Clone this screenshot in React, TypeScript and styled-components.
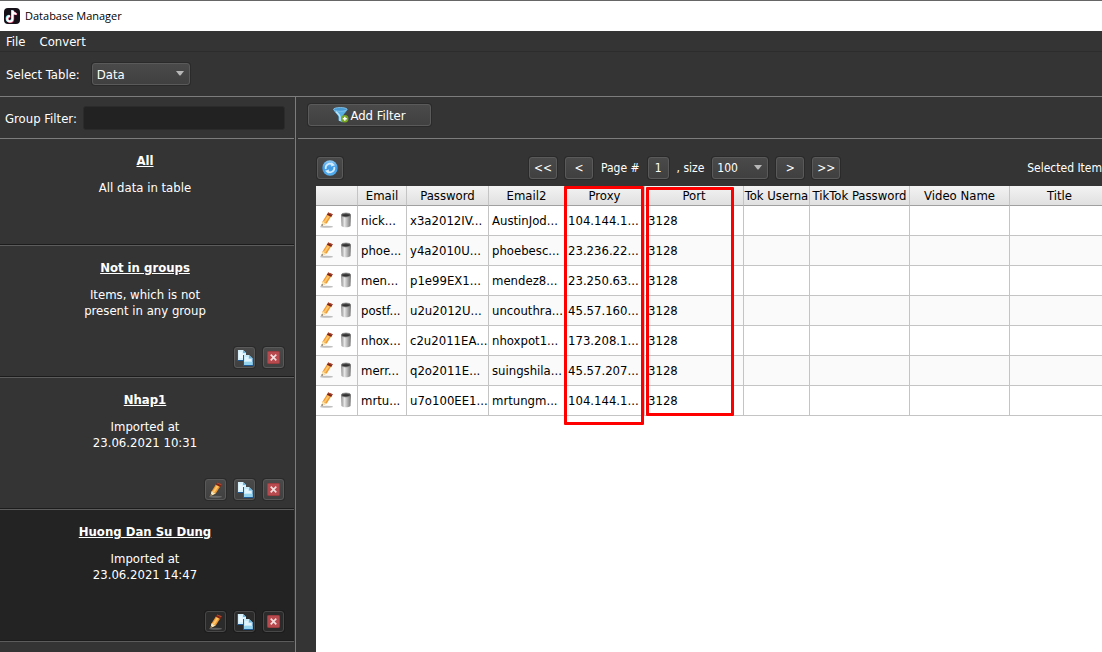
import React from "react";
import styled, { createGlobalStyle, css } from "styled-components";

const uiFont = `"DejaVu Sans Condensed", "Noto Sans", sans-serif`;

const GlobalStyle = createGlobalStyle`
  *, *::before, *::after { box-sizing: border-box; }
  html, body { margin: 0; padding: 0; }
  body { background: #343434; overflow: hidden; }
  body, button, input, select { font-family: ${uiFont}; font-size: 13px; }
  h2, p { margin: 0; }
`;

const Window = styled.div`
  display: flex;
  flex-direction: column;
  height: 100vh;
  color: #fff;
  background: #343434;
  border-top: 1px solid #666;
`;

const TitleBar = styled.header`
  display: flex;
  align-items: center;
  gap: 5px;
  flex: none;
  height: 30px;
  padding: 0 4px 1px;
  background: #fff;
  color: #000;
  font-family: "Open Sans", sans-serif;
  font-size: 11px;
`;

const MenuBar = styled.nav`
  display: flex;
  flex: none;
  gap: 14px;
  height: 21px;
  padding: 1px 6px 0;
  border-bottom: 1px solid #2c2c2c;
`;

const MenuButton = styled.button`
  padding: 0;
  border: 0;
  background: none;
  color: #fff;
`;

const Toolbar = styled.div`
  display: flex;
  align-items: center;
  flex: none;
  gap: 12px;
  height: 45px;
  padding: 0 6px;
  border-bottom: 1px solid #7c7c7c;
`;

const raised = css`
  border: 1px solid #5a5a5a;
  border-radius: 3px;
  background: linear-gradient(#4a4a4a, #404040);
  box-shadow: 0 0 0 1px #2a2a2a;
  color: #fff;
`;

const SelectBox = styled.div<{ $width: number }>`
  position: relative;
  width: ${(p) => p.$width}px;
  height: 22px;

  select {
    appearance: none;
    width: 100%;
    height: 100%;
    padding: 0 4px;
    ${raised}
  }

  svg {
    position: absolute;
    right: 6px;
    top: 8px;
    pointer-events: none;
  }
`;

const Body = styled.div`
  display: flex;
  flex: 1;
  min-height: 0;
`;

const Sidebar = styled.aside`
  display: flex;
  flex-direction: column;
  flex: none;
  width: 296px;
  padding-right: 1px;
  border-right: 1px solid #7c7c7c;
  overflow: hidden;
`;

const GroupFilter = styled.div`
  display: flex;
  align-items: center;
  flex: none;
  gap: 6px;
  height: 42px;
  padding: 1px 9px 0 5px;
  border-bottom: 1px solid #7c7c7c;

  input {
    flex: 1;
    min-width: 0;
    height: 24px;
    padding: 0 6px;
    border: 1px solid #2b2b2b;
    border-radius: 3px;
    background: #222;
    color: #fff;
  }
`;

const Group = styled.section<{ $selected?: boolean; $short?: boolean }>`
  display: flex;
  flex-direction: column;
  flex: none;
  height: ${(p) => (p.$short ? 107 : 132)}px;
  padding: 14px 10px 9px 6px;
  border-bottom: 1px solid #5c5c5c;
  box-shadow: inset 0 -1px #1c1c1c;
  background: ${(p) => (p.$selected ? "#232323" : "#343434")};
  text-align: center;
  line-height: 16px;

  h2 {
    font-size: 13px;
    line-height: 16px;
    text-decoration: underline;
  }

  p {
    margin-top: 11px;
    white-space: pre-line;
  }
`;

const GroupActions = styled.div`
  display: flex;
  justify-content: flex-end;
  gap: 8px;
  margin-top: auto;
`;

const IconButton = styled.button<{ $dark?: boolean }>`
  display: grid;
  place-items: center;
  width: 21px;
  height: 21px;
  padding: 0;
  ${raised}
  ${(p) => p.$dark && css`background: #2b2b2b; border-color: #484848; box-shadow: 0 0 0 1px #1c1c1c;`}
`;

const Main = styled.main`
  display: flex;
  flex-direction: column;
  flex: 1;
  min-width: 0;
  padding-left: 2px;
`;

const FilterBar = styled.div`
  flex: none;
  height: 42px;
  padding: 7px 10px;
  border-bottom: 1px solid #7c7c7c;
`;

const AddFilter = styled.button`
  display: flex;
  align-items: center;
  justify-content: center;
  gap: 1px;
  width: 123px;
  height: 22px;
  padding: 0;
  ${raised}
`;

const Pager = styled.div`
  display: flex;
  align-items: center;
  flex: none;
  height: 47px;
  padding: 11px 0 0 19px;
  white-space: nowrap;
  overflow: hidden;
  font-size: 12px;

  button, select { font-size: 12px; }
`;

const PageButton = styled.button<{ $width?: number }>`
  display: grid;
  place-items: center;
  flex: none;
  width: ${(p) => p.$width ?? 28}px;
  height: 22px;
  padding: 0;
  ${raised}
`;

const PageControls = styled.div`
  display: flex;
  align-items: center;
  gap: 8px;
  margin-left: 186px;
`;

const Selected = styled.span`
  margin-left: auto;
`;

const Grid = styled.div`
  position: relative;
  flex: 1;
  margin-left: 18px;
  background: #fff;
  overflow: hidden;
`;

const Table = styled.table`
  table-layout: fixed;
  width: 100%;
  min-width: 794px;
  border-collapse: separate;
  border-spacing: 0;
  color: #000;

  th, td {
    padding: 0;
    border-right: 1px solid #c4c4c4;
    border-bottom: 1px solid #c4c4c4;
    overflow: hidden;
    white-space: nowrap;
  }

  th {
    height: 20px;
    border-bottom-color: #a0a0a0;
    background: linear-gradient(#f3f3f3, #e0e0e0);
    font-weight: 400;
  }

  td {
    height: 30px;
    padding-left: 3px;
  }

  tbody tr:nth-child(even) { background: #fafafa; }
`;

const HeadLabel = styled.div`
  display: flex;
  justify-content: center;
  padding-top: 1px;
  line-height: 18px;
`;

const RowActions = styled.div`
  display: flex;
  align-items: center;
  gap: 3px;
  padding-bottom: 2px;

  button {
    display: flex;
    padding: 0;
    border: 0;
    background: none;
  }
`;

const Highlight = styled.div<{ $left: number; $top: number; $width: number; $height: number }>`
  position: absolute;
  left: ${(p) => p.$left}px;
  top: ${(p) => p.$top}px;
  width: ${(p) => p.$width}px;
  height: ${(p) => p.$height}px;
  border: 3px solid #f00;
  border-radius: 1px;
  pointer-events: none;
`;

const Arrow = () => (
  <svg width="8" height="5" viewBox="0 0 8 5"><path d="M0 0h8L4.500 4.500h-1z" fill="#b8b8b8" /></svg>
);

const Logo = () => (
  <svg width="16" height="16" viewBox="0 0 16 16" fill="none">
    <rect width="16" height="16" rx="4" fill="#161018" />
    <g strokeWidth="2">
      <path d="M8 2v8.400a2.700 2.700 0 1 1-2.700-2.700M8 2.200c.2 2 1.700 3.200 3.900 3.300" stroke="#6fdfe6" />
      <path d="M9.200 2.800v8.400a2.700 2.700 0 1 1-2.700-2.700M9.200 3c.2 2 1.700 3.200 3.900 3.300" stroke="#e0406e" />
      <path d="M8.600 2.400v8.400a2.700 2.700 0 1 1-2.700-2.700M8.600 2.600c.2 2 1.700 3.200 3.900 3.300" stroke="#fff" />
    </g>
  </svg>
);

const Pencil = () => (
  <svg width="16" height="16" viewBox="0 0 16 16">
    <ellipse cx="7.500" cy="14.700" rx="6.500" ry="1" fill="#8a8a8a" opacity=".55" />
    <path d="M2.500 14l1-4.600L8 2.300l4.200 2.300-4.500 7z" fill="#f09a34" />
    <path d="M4.700 9.800L9 3l1.700.9-4.300 6.900z" fill="#ffc66a" />
    <path d="M2.500 14l1-4.600 1.500.2.600 1.300 2.100.7z" fill="#f6e6b8" />
    <path d="M2.500 14l.4-1.900 1.200.9z" fill="#333" />
    <path d="M7.800 2.700L9.200.4l4.500 1.900-1.400 2.700z" fill="#7c2416" />
    <path d="M8.700 1.300l.5-.9 4.500 1.900-.5 1z" fill="#b24a30" />
  </svg>
);

const Trash = () => (
  <svg width="16" height="16" viewBox="0 0 16 16">
    <defs>
      <linearGradient id="can"><stop stopColor="#8c8c8c" /><stop offset=".35" stopColor="#e6e6e6" /><stop offset="1" stopColor="#747474" /></linearGradient>
    </defs>
    <path d="M3 3l.5 11c1.400 1.700 7.600 1.700 9 0L13 3z" fill="url(#can)" />
    <ellipse cx="8" cy="3" rx="4.800" ry="2" fill="#4c4c4c" stroke="#8a8a8a" strokeWidth=".8" />
    <path d="M4.500 3.400c1.500-1.300 5.500-1.300 7 0-1.500 1.100-5.500 1.100-7 0z" fill="#303030" />
  </svg>
);

const Copy = () => (
  <svg width="16" height="16" viewBox="0 0 16 16">
    <path d="M0 0h6l3 3v8H0z" fill="#1d5a96" />
    <path d="M1 0h5l3 3v7H1z" fill="#d6f0fb" />
    <path d="M6 0v3h3z" fill="#6eb6dc" />
    <path d="M2 3h3M2 5h5M2 7h5" stroke="#fff" />
    <path d="M6 5h6l4 3.500V16H6z" fill="#1d5a96" />
    <path d="M7 5h5l3.500 3.500V15H7z" fill="#c6e9f8" />
    <path d="M12 5v3.500h3.500z" fill="#6eb6dc" />
    <path d="M8 8h3M8 10h6" stroke="#fff" />
    <path d="M7 12h8.500v3H7z" fill="#94d3ee" />
  </svg>
);

const Close = () => (
  <svg width="13" height="13" viewBox="0 0 14 14">
    <rect x=".5" y=".5" width="13" height="13" rx="1" fill="#b64a4e" stroke="#a03c40" />
    <path d="M4 4l6 6M10 4l-6 6" stroke="#f4dede" strokeWidth="1.800" />
  </svg>
);

const Funnel = () => (
  <svg width="16" height="16" viewBox="0 0 16 16">
    <path d="M.5 2.500c0 2 5 5.500 5 7.500v3.500l4 2V10c0-2 4.500-5.500 4.500-7.500z" fill="#59afe2" />
    <path d="M3 4.500c1.500 2 3.800 3.500 4 5.500v4" stroke="#b8e4fa" strokeWidth="1.500" fill="none" />
    <ellipse cx="7.300" cy="2.400" rx="6.800" ry="1.900" fill="#4a9bd4" stroke="#8ccaf0" strokeWidth=".8" />
    <circle cx="11.800" cy="11.800" r="3.700" fill="#78a722" />
    <path d="M9.800 11.800h4M11.800 9.800v4" stroke="#fff" strokeWidth="1.400" />
  </svg>
);

const Refresh = () => (
  <svg width="16" height="16" viewBox="0 0 16 16">
    <defs><linearGradient id="ball" x2="0" y2="1"><stop stopColor="#8dcaf6" /><stop offset=".5" stopColor="#3d99e4" /><stop offset="1" stopColor="#58b2f2" /></linearGradient></defs>
    <circle cx="8" cy="8" r="7.700" fill="url(#ball)" />
    <path d="M3.800 9A4.300 4.300 0 0 1 10 4.200M12.200 7A4.300 4.300 0 0 1 6 11.800" stroke="#d4ecff" strokeWidth="1.800" fill="none" />
    <path d="M9.500 2.200l3.500 3-4 1.400zM6.500 13.800l-3.500-3 4-1.400z" fill="#d4ecff" />
  </svg>
);

const groups = [
  { title: "All", text: "All data in table", actions: [] as string[] },
  { title: "Not in groups", text: "Items, which is not\npresent in any group", actions: ["copy", "delete"] },
  { title: "Nhap1", text: "Imported at\n23.06.2021 10:31", actions: ["edit", "copy", "delete"] },
  { title: "Huong Dan Su Dung", text: "Imported at\n23.06.2021 14:47", actions: ["edit", "copy", "delete"], selected: true },
];

const actionIcons: Record<string, React.ReactNode> = {
  edit: <Pencil />,
  copy: <Copy />,
  delete: <Close />,
};

const columns = [
  { label: "", width: 42 },
  { label: "Email", width: 49 },
  { label: "Password", width: 82 },
  { label: "Email2", width: 76 },
  { label: "Proxy", width: 80 },
  { label: "Port", width: 99 },
  { label: "Tok Userna", width: 66 },
  { label: "TikTok Password", width: 100 },
  { label: "Video Name", width: 100 },
  { label: "Title" },
];

const rows = [
  ["nick...", "x3a2012IV...", "AustinJod...", "104.144.1...", "3128"],
  ["phoe...", "y4a2010U...", "phoebesc...", "23.236.22...", "3128"],
  ["men...", "p1e99EX1...", "mendez8...", "23.250.63...", "3128"],
  ["postf...", "u2u2012U...", "uncouthra...", "45.57.160...", "3128"],
  ["nhox...", "c2u2011EA...", "nhoxpot1...", "173.208.1...", "3128"],
  ["merr...", "q2o2011E...", "suingshila...", "45.57.207...", "3128"],
  ["mrtu...", "u7o100EE1...", "mrtungm...", "104.144.1...", "3128"],
];

export default function App() {
  return (
    <>
      <GlobalStyle />
      <Window>
        <TitleBar><Logo />Database Manager</TitleBar>
        <MenuBar>
          <MenuButton>File</MenuButton>
          <MenuButton>Convert</MenuButton>
        </MenuBar>
        <Toolbar>
          <label htmlFor="table">Select Table:</label>
          <SelectBox $width={98}>
            <select id="table"><option>Data</option></select>
            <Arrow />
          </SelectBox>
        </Toolbar>
        <Body>
          <Sidebar>
            <GroupFilter>
              <label htmlFor="group">Group Filter:</label>
              <input id="group" type="text" />
            </GroupFilter>
            {groups.map((g) => (
              <Group key={g.title} $selected={g.selected} $short={!g.actions.length}>
                <h2>{g.title}</h2>
                <p>{g.text}</p>
                {g.actions.length > 0 && (
                  <GroupActions>
                    {g.actions.map((a) => (
                      <IconButton key={a} aria-label={a} $dark={g.selected}>{actionIcons[a]}</IconButton>
                    ))}
                  </GroupActions>
                )}
              </Group>
            ))}
          </Sidebar>
          <Main>
            <FilterBar>
              <AddFilter><Funnel />Add Filter</AddFilter>
            </FilterBar>
            <Pager>
              <PageButton $width={26} aria-label="Refresh"><Refresh /></PageButton>
              <PageControls>
                <PageButton>&lt;&lt;</PageButton>
                <PageButton>&lt;</PageButton>
                <span>Page #</span>
                <PageButton $width={21}>1</PageButton>
                <label htmlFor="size">, size</label>
                <SelectBox $width={56}>
                  <select id="size"><option>100</option></select>
                  <Arrow />
                </SelectBox>
                <PageButton>&gt;</PageButton>
                <PageButton>&gt;&gt;</PageButton>
              </PageControls>
              <Selected>Selected Item</Selected>
            </Pager>
            <Grid>
              <Table>
                <colgroup>
                  {columns.map((c, i) => <col key={i} width={c.width} />)}
                </colgroup>
                <thead>
                  <tr>{columns.map((c, i) => <th key={i}><HeadLabel>{c.label}</HeadLabel></th>)}</tr>
                </thead>
                <tbody>
                  {rows.map((r, i) => (
                    <tr key={i}>
                      <td>
                        <RowActions>
                          <button aria-label="Edit row"><Pencil /></button>
                          <button aria-label="Delete row"><Trash /></button>
                        </RowActions>
                      </td>
                      {columns.slice(1).map((c, j) => <td key={c.label}>{r[j]}</td>)}
                    </tr>
                  ))}
                </tbody>
              </Table>
              <Highlight $left={248} $top={0} $width={80} $height={239} />
              <Highlight $left={330} $top={1} $width={88} $height={229} />
            </Grid>
          </Main>
        </Body>
      </Window>
    </>
  );
}
